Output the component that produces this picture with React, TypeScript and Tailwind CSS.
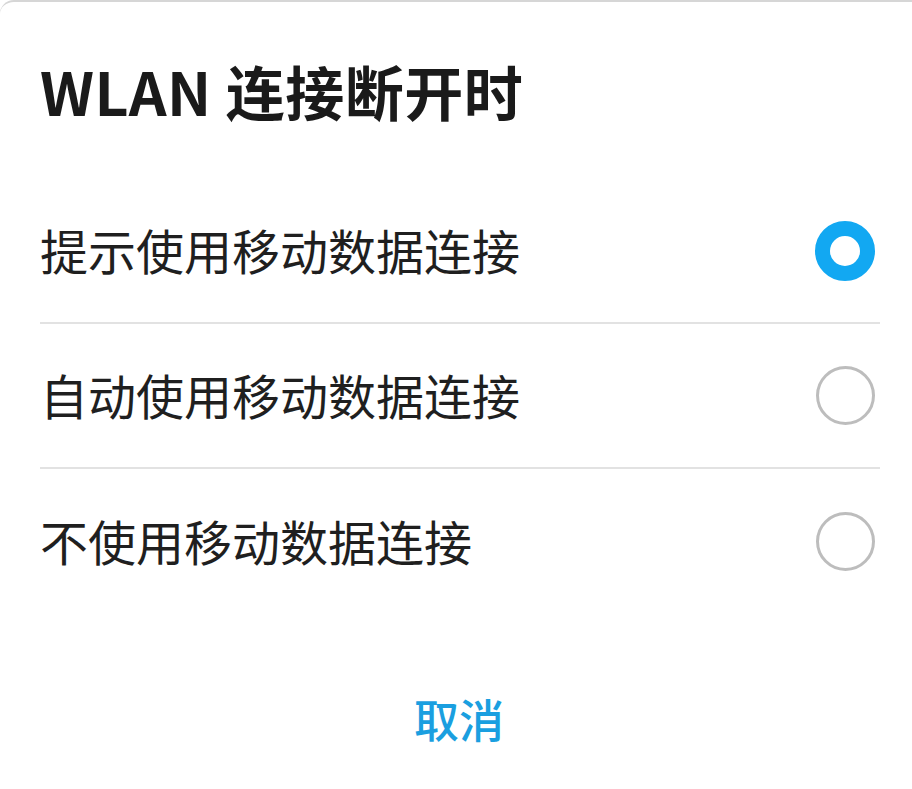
import React from "react";

const options = ["提示使用移动数据连接", "自动使用移动数据连接", "不使用移动数据连接"];

export default function App() {
  const selected = 0;
  return (
    <div
      className="w-[912px] h-[789px] bg-white border-t-2 border-[#d6d6d6] rounded-tl-[14px] overflow-hidden"
      style={{ fontFamily: '"Noto Sans CJK SC", "Noto Sans", sans-serif' }}
    >
      <div className="pl-[40px] pt-[59px] h-[177px]">
        <h1 className="text-[59px] leading-none font-bold text-[#1a1a1a] tracking-[0.5px]">WLAN 连接断开时</h1>
      </div>
      <div className="pl-[40px] pr-[32px]">
        {options.map((o, i) => (
          <div
            key={o}
            className={`h-[145px] flex items-center justify-between ${i < options.length - 1 ? "border-b-2 border-[#e2e2e2]" : ""}`}
          >
            <span className="text-[48px] leading-none text-[#1f1f1f] -mt-[4px]">{o}</span>
            <span className="mr-[5px]">
              {i === selected ? (
                <span className="block w-[60px] h-[60px] rounded-full border-[15px] border-[#12a8f2] bg-white" />
              ) : (
                <span className="block w-[59px] h-[59px] rounded-full border-[3px] border-[#bdbdbd] bg-white" />
              )}
            </span>
          </div>
        ))}
      </div>
      <div className="flex justify-center pt-[82px]">
        <span className="text-[45px] leading-none font-medium text-[#1a9fe0] pl-[6px]">取消</span>
      </div>
    </div>
  );
}
